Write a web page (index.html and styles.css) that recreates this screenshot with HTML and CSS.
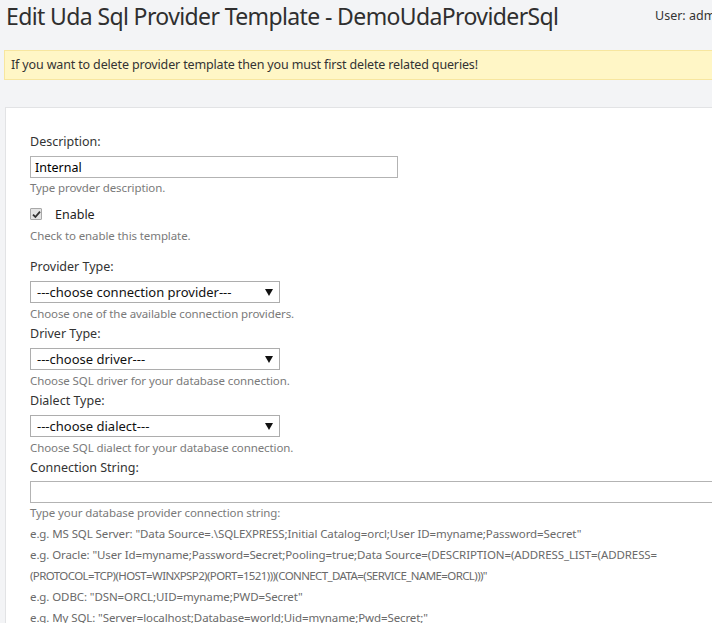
FILE: index.html
```html
<!DOCTYPE html>
<html>
<head>
<meta charset="utf-8">
<title>Edit Uda Sql Provider Template</title>
<link rel="stylesheet" href="styles.css">
</head>
<body>
<div class="page">
  <header class="top">
    <h1 class="title">Edit Uda Sql Provider Template - DemoUdaProviderSql</h1>
    <div class="user">User: admin</div>
  </header>
  <div class="alert">If you want to delete provider template then you must first delete related queries!</div>
  <div class="panel">
    <div class="label">Description:</div>
    <div class="input short">Internal</div>
    <div class="help">Type provder description.</div>
    <div class="check-row">
      <span class="checkbox"><svg width="9" height="9" viewBox="0 0 9 9"><path d="M1 4.6 L3.4 7 L8 1.6" fill="none" stroke="#333" stroke-width="1.8"/></svg></span>
      <span class="check-label">Enable</span>
    </div>
    <div class="help">Check to enable this template.</div>
    <div class="label gap">Provider Type:</div>
    <div class="select"><span>---choose connection provider---</span><svg width="8" height="7" viewBox="0 0 8 7"><path d="M0 0 H8 L4 7 Z" fill="#111"/></svg></div>
    <div class="help">Choose one of the available connection providers.</div>
    <div class="label">Driver Type:</div>
    <div class="select"><span>---choose driver---</span><svg width="8" height="7" viewBox="0 0 8 7"><path d="M0 0 H8 L4 7 Z" fill="#111"/></svg></div>
    <div class="help">Choose SQL driver for your database connection.</div>
    <div class="label">Dialect Type:</div>
    <div class="select"><span>---choose dialect---</span><svg width="8" height="7" viewBox="0 0 8 7"><path d="M0 0 H8 L4 7 Z" fill="#111"/></svg></div>
    <div class="help">Choose SQL dialect for your database connection.</div>
    <div class="label">Connection String:</div>
    <div class="input wide"></div>
    <div class="help">Type your database provider connection string:</div>
    <div class="examples">
      <div>e.g. MS SQL Server: "Data Source=.\SQLEXPRESS;Initial Catalog=orcl;User ID=myname;Password=Secret"</div>
      <div>e.g. Oracle: "User Id=myname;Password=Secret;Pooling=true;Data Source=(DESCRIPTION=(ADDRESS_LIST=(ADDRESS=<br><span class="caps">(PROTOCOL=TCP)(HOST=WINXPSP2)(PORT=1521)))(CONNECT_DATA=(SERVICE_NAME=ORCL)))"</span></div>
      <div>e.g. ODBC: "DSN=ORCL;UID=myname;PWD=Secret"</div>
      <div>e.g. My SQL: "Server=localhost;Database=world;Uid=myname;Pwd=Secret;"</div>
    </div>
  </div>
</div>
</body>
</html>
```
FILE: styles.css
```css
html, body {
  margin: 0;
  padding: 0;
  background: #f3f4f6;
  overflow: hidden;
}
.page {
  width: 760px;
  font-family: "Noto Sans", "Open Sans", sans-serif;
  color: #333;
}
.top {
  display: flex;
  align-items: flex-start;
  height: 50px;
}
.title {
  margin: 0;
  padding: 2px 0 0 6px;
  font-size: 23px;
  font-weight: 400;
  line-height: 28px;
  color: #2f2f2f;
  letter-spacing: -0.62px;
  white-space: nowrap;
  width: 649px;
}
.user {
  padding-top: 7px;
  font-size: 12.5px;
  line-height: 18px;
  white-space: nowrap;
  color: #333;
}
.alert {
  margin-left: 4px;
  height: 28px;
  line-height: 28px;
  border: 1px solid #f7e69f;
  background: #fff6c6;
  padding-left: 6px;
  font-size: 12.5px;
  color: #333;
  letter-spacing: -0.15px;
  white-space: nowrap;
}
.panel {
  margin: 27px 0 0 5px;
  background: #fff;
  border: 1px solid #e2e3e5;
  padding: 24px 0 0 24px;
  height: 520px;
}
.label {
  font-size: 12.5px;
  line-height: 20px;
  margin-bottom: 4px;
  color: #333;
  white-space: nowrap;
}
.label.gap {
  margin-top: 11px;
}
.input {
  box-sizing: border-box;
  height: 22px;
  border: 1px solid #b3b3b3;
  background: #fff;
  font-size: 12.5px;
  line-height: 22px;
  padding-left: 4px;
  color: #000;
}
.input.short {
  width: 368px;
}
.input.wide {
  width: 720px;
  margin-top: -1px;
}
.help {
  font-size: 11.5px;
  line-height: 20px;
  color: #7a7a7a;
  white-space: nowrap;
  letter-spacing: -0.1px;
}
.check-row {
  display: flex;
  align-items: center;
  height: 20px;
  margin-top: 6px;
  margin-bottom: 2px;
}
.checkbox {
  box-sizing: border-box;
  width: 12px;
  height: 12px;
  border: 1px solid #a8a8a8;
  background: #e4e4e4;
  display: flex;
  align-items: center;
  justify-content: center;
  border-radius: 1px;
}
.check-label {
  margin-left: 13px;
  font-size: 12.5px;
  color: #222;
}
.select {
  box-sizing: border-box;
  width: 250px;
  height: 22px;
  border: 1px solid #adadad;
  background: #fff;
  display: flex;
  align-items: center;
  justify-content: space-between;
  padding: 0 6px 0 6px;
  font-size: 13px;
  color: #111;
  margin-bottom: 1px;
}
.examples {
  font-size: 11.5px;
  line-height: 21px;
  color: #6a6a6a;
  white-space: nowrap;
  letter-spacing: -0.1px;
}
.examples .caps {
  letter-spacing: -0.6px;
}
```
